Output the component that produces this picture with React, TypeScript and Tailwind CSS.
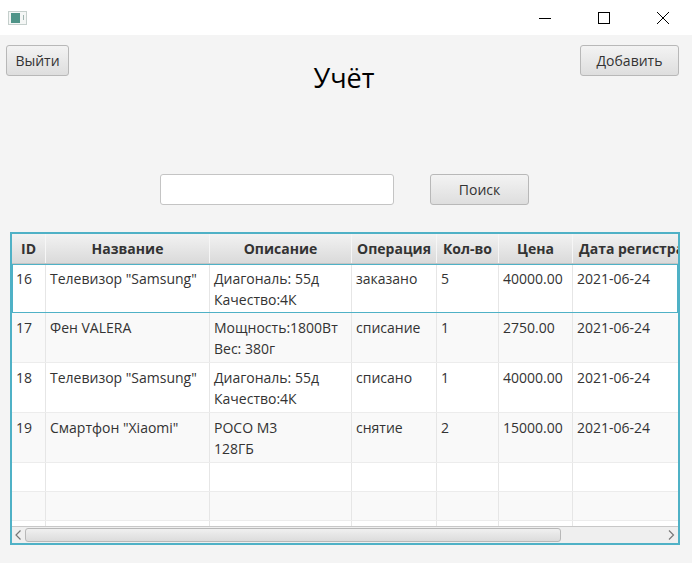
const columns = [
  { title: 'ID', width: 'w-[34px]' },
  { title: 'Название', width: 'w-[164px]' },
  { title: 'Описание', width: 'w-[142px]' },
  { title: 'Операция', width: 'w-[85px]' },
  { title: 'Кол-во', width: 'w-[62px]' },
  { title: 'Цена', width: 'w-[74px]' },
  { title: 'Дата регистрации', width: 'w-[148px]' },
]

const rows = [
  { height: 'h-[49px]', cells: ['16', 'Телевизор "Samsung"', 'Диагональ: 55д\nКачество:4К', 'заказано', '5', '40000.00', '2021-06-24'] },
  { height: 'h-[50px]', cells: ['17', 'Фен VALERA', 'Мощность:1800Вт\nВес: 380г', 'списание', '1', '2750.00', '2021-06-24'] },
  { height: 'h-[50px]', cells: ['18', 'Телевизор "Samsung"', 'Диагональ: 55д\nКачество:4К', 'списано', '1', '40000.00', '2021-06-24'] },
  { height: 'h-[50px]', cells: ['19', 'Смартфон "Xiaomi"', 'POCO M3\n128ГБ', 'снятие', '2', '15000.00', '2021-06-24'] },
  { height: 'h-[29px]', cells: ['', '', '', '', '', '', ''] },
  { height: 'h-[29px]', cells: ['', '', '', '', '', '', ''] },
  { height: 'h-[6px]', cells: ['', '', '', '', '', '', ''] },
]

const buttonClass =
  'h-[31px] rounded-[3px] border border-[#b8b8b8] bg-gradient-to-b from-[#f3f3f3] to-[#dedede] text-[14px] text-[#333333]'

function TitleBar() {
  return (
    <div className="flex h-[35px] items-center justify-between bg-white pl-[8px] pr-[23px]">
      <div className="flex h-[14px] w-[19px] items-center gap-[3px] border border-[#c5cfcc] bg-[#f4f6f5] pl-[2px]">
        <div className="h-[10px] w-[9px] bg-[#4f9488]" />
        <div className="h-[5px] w-[1px] bg-[#9fb5b0]" />
      </div>
      <div className="flex items-center gap-[47px]">
        <svg width="12" height="12" viewBox="0 0 12 12" className="text-black">
          <path d="M0 6.5H12" stroke="currentColor" strokeWidth="1" />
        </svg>
        <svg width="12" height="12" viewBox="0 0 12 12" className="text-black">
          <rect x="0.5" y="0.5" width="11" height="11" fill="none" stroke="currentColor" strokeWidth="1" />
        </svg>
        <svg width="12" height="12" viewBox="0 0 12 12" className="text-black">
          <path d="M0 0L12 12M12 0L0 12" stroke="currentColor" strokeWidth="1" />
        </svg>
      </div>
    </div>
  )
}

function ScrollBar() {
  return (
    <div className="flex h-[17px] shrink-0 items-center border-t border-[#c8c8c8] bg-[#efefef]">
      <svg width="13" height="14" viewBox="0 0 13 14" className="shrink-0 text-[#777777]">
        <path d="M8.5 2.5L4 7L8.5 11.5" fill="none" stroke="currentColor" strokeWidth="1.2" />
      </svg>
      <div className="h-[14px] w-[536px] shrink-0 rounded-[3px] border border-[#b8b8b8] bg-gradient-to-b from-[#f0f0f0] to-[#dcdcdc]" />
      <div className="flex-1" />
      <svg width="14" height="14" viewBox="0 0 14 14" className="shrink-0 text-[#777777]">
        <path d="M5 2.5L9.5 7L5 11.5" fill="none" stroke="currentColor" strokeWidth="1.2" />
      </svg>
    </div>
  )
}

function Table() {
  return (
    <div className="ml-[10px] mr-[12px] mt-[27px] flex h-[313px] flex-col overflow-hidden border-2 border-[#4fb1c6] bg-white">
      <div className="flex h-[30px] shrink-0 border-b border-[#c4c4c4] bg-gradient-to-b from-[#f2f2f2] to-[#dadada]">
        {columns.map((col) => (
          <div
            key={col.title}
            className={`${col.width} flex shrink-0 items-center justify-center overflow-hidden whitespace-nowrap border-r border-[#f6f6f6] text-[14px] font-bold text-[#333333]`}
          >
            {col.title}
          </div>
        ))}
      </div>
      <div className="min-h-0 flex-1 overflow-hidden">
        {rows.map((row, i) => (
          <div
            key={i}
            className={`${row.height} ${i === 0 ? 'outline outline-1 -outline-offset-1 outline-[#4fb1c6]' : 'border-b border-[#ececec]'} ${i % 2 === 0 ? 'bg-white' : 'bg-[#f9f9f9]'} flex overflow-hidden`}
          >
            {row.cells.map((cell, j) => (
              <div
                key={j}
                className={`${columns[j].width} shrink-0 whitespace-pre-line border-r border-[#e6e6e6] px-[4px] pt-[4px] text-[14px] leading-[21px] text-[#333333]`}
              >
                {cell}
              </div>
            ))}
          </div>
        ))}
      </div>
      <ScrollBar />
    </div>
  )
}

export default function App() {
  return (
    <div className="h-[563px] w-[692px] overflow-hidden bg-[#f4f4f4] font-['Open_Sans','Liberation_Sans',sans-serif]">
      <TitleBar />
      <div className="flex items-start justify-between pl-[6px] pr-[13px] pt-[10px]">
        <button className={`${buttonClass} w-[63px]`}>Выйти</button>
        <h1 className="pl-[39px] pt-[13px] text-[27px] leading-[40px] text-black">Учёт</h1>
        <button className={`${buttonClass} w-[99px]`}>Добавить</button>
      </div>
      <div className="mt-[76px] flex items-center pl-[160px]">
        <input className="h-[31px] w-[234px] rounded-[3px] border border-[#c4c4c4] bg-white" />
        <button className={`${buttonClass} ml-[36px] w-[99px]`}>Поиск</button>
      </div>
      <Table />
    </div>
  )
}
